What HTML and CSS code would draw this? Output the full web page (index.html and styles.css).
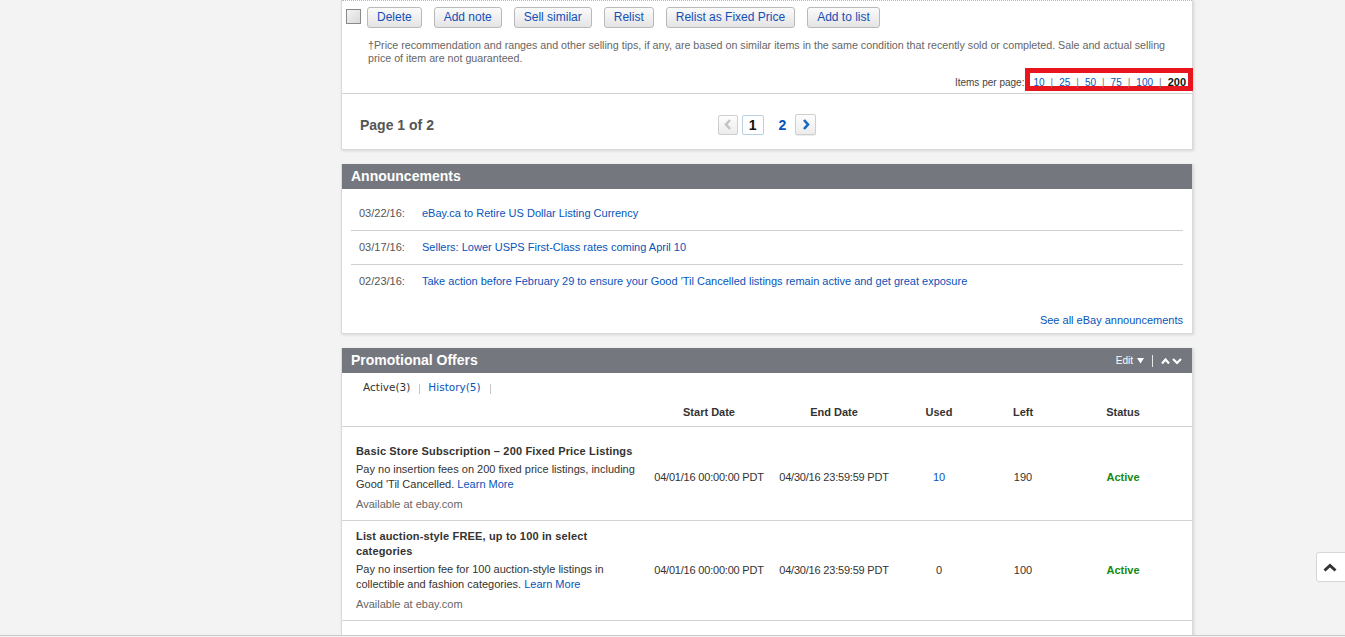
FILE: index.html
```html
<!DOCTYPE html>
<html>
<head>
<meta charset="utf-8">
<title>Seller Hub</title>
<link rel="stylesheet" href="styles.css">
</head>
<body>
<div class="main">
  <section class="card card-top">
    <div class="actions">
      <span class="cb"></span>
      <button class="btn">Delete</button>
      <button class="btn">Add note</button>
      <button class="btn">Sell similar</button>
      <button class="btn">Relist</button>
      <button class="btn">Relist as Fixed Price</button>
      <button class="btn">Add to list</button>
    </div>
    <p class="note">†Price recommendation and ranges and other selling tips, if any, are based on similar items in the same condition that recently sold or completed. Sale and actual selling price of item are not guaranteed.</p>
    <div class="ipp">
      <span class="ipp-label">Items per page:</span>
      <span class="ipp-box">
        <a href="#">10</a><span class="sep">|</span><a href="#">25</a><span class="sep">|</span><a href="#">50</a><span class="sep">|</span><a href="#">75</a><span class="sep">|</span><a href="#">100</a><span class="sep">|</span><b>200</b>
      </span>
    </div>
    <div class="pager-row">
      <span class="page-of">Page 1 of 2</span>
      <div class="pager">
        <span class="pbtn prev"><svg width="8" height="11" viewBox="0 0 8 11"><polyline points="6,1 2,5.5 6,10" fill="none" stroke="#c4c4c4" stroke-width="2.6"/></svg></span>
        <span class="pcur">1</span>
        <a class="pnum" href="#">2</a>
        <span class="pbtn next"><svg width="8" height="11" viewBox="0 0 8 11"><polyline points="2,1 6,5.5 2,10" fill="none" stroke="#1a66c4" stroke-width="2.6"/></svg></span>
      </div>
      <span></span>
    </div>
  </section>

  <section class="card">
    <h2 class="bar">Announcements</h2>
    <div class="ann">
      <div class="ann-row"><span class="ann-date">03/22/16:</span><a href="#">eBay.ca to Retire US Dollar Listing Currency</a></div>
      <div class="ann-row"><span class="ann-date">03/17/16:</span><a href="#">Sellers: Lower USPS First-Class rates coming April 10</a></div>
      <div class="ann-row"><span class="ann-date">02/23/16:</span><a href="#">Take action before February 29 to ensure your Good 'Til Cancelled listings remain active and get great exposure</a></div>
      <div class="ann-all"><a href="#">See all eBay announcements</a></div>
    </div>
  </section>

  <section class="card">
    <div class="bar bar-flex">
      <h2 class="bar-title">Promotional Offers</h2>
      <div class="bar-tools">
        <span class="edit">Edit <svg width="7" height="6" viewBox="0 0 7 6"><polygon points="0,0 7,0 3.5,5.5" fill="#fff"/></svg></span>
        <span class="vsep"></span>
        <svg width="21" height="8" viewBox="0 0 21 8"><polyline points="1,6.5 4.5,2.5 8,6.5" fill="none" stroke="#fff" stroke-width="2.2"/><polyline points="12,2 16,6 20,2" fill="none" stroke="#fff" stroke-width="2.2"/></svg>
      </div>
    </div>
    <div class="tabs">
      <span class="tab tab-on">Active(3)</span><span class="tsep"></span><a class="tab" href="#">History(5)</a><span class="tsep"></span>
    </div>
    <table class="offers">
      <colgroup><col class="c-title"><col class="c-start"><col class="c-end"><col class="c-used"><col class="c-left"><col class="c-status"></colgroup>
      <thead>
        <tr><th></th><th>Start Date</th><th>End Date</th><th>Used</th><th>Left</th><th class="st">Status</th></tr>
      </thead>
      <tbody>
        <tr class="first">
          <td class="t">
            <div class="o-title">Basic Store Subscription – 200 Fixed Price Listings</div>
            <div class="o-desc">Pay no insertion fees on 200 fixed price listings, including Good 'Til Cancelled. <a href="#">Learn More</a></div>
            <div class="o-avail">Available at ebay.com</div>
          </td>
          <td class="d">04/01/16 00:00:00 PDT</td>
          <td class="d">04/30/16 23:59:59 PDT</td>
          <td><a href="#">10</a></td>
          <td>190</td>
          <td class="st active">Active</td>
        </tr>
        <tr>
          <td class="t">
            <div class="o-title">List auction-style FREE, up to 100 in select categories</div>
            <div class="o-desc">Pay no insertion fee for 100 auction-style listings in collectible and fashion categories. <a href="#">Learn More</a></div>
            <div class="o-avail">Available at ebay.com</div>
          </td>
          <td class="d">04/01/16 00:00:00 PDT</td>
          <td class="d">04/30/16 23:59:59 PDT</td>
          <td>0</td>
          <td>100</td>
          <td class="st active">Active</td>
        </tr>
        <tr>
          <td class="t">
            <div class="o-title">&nbsp;</div>
          </td>
          <td></td><td></td><td></td><td></td><td class="st"></td>
        </tr>
      </tbody>
    </table>
  </section>
</div>

<a class="to-top" href="#"><svg width="14" height="9" viewBox="0 0 14 9"><polyline points="1.5,7.5 7,2.5 12.5,7.5" fill="none" stroke="#333" stroke-width="3"/></svg></a>
<div class="bottom-line"></div>
</body>
</html>
```

FILE: styles.css
```css
* { box-sizing: border-box; }
html, body { margin: 0; padding: 0; }
body {
  background: #f3f3f3;
  font-family: "Liberation Sans", Arial, sans-serif;
  font-size: 11px;
  color: #333;
  height: 637px;
  overflow: hidden;
}
a { color: #0654ba; text-decoration: none; }

.main {
  margin-left: 341px;
  width: 852px;
  display: flex;
  flex-direction: column;
  gap: 14px;
}

.card {
  background: #fff;
  border: 1px solid #dadada;
  border-top: 0;
  box-shadow: 1px 1px 3px rgba(0, 0, 0, 0.12);
}

/* top card */
.actions {
  border-top: 1px dotted #b8b8b8;
  padding: 6px 0 0 4px;
  display: flex;
  gap: 12px;
  height: 28px;
  align-items: flex-start;
}
.cb {
  width: 15px;
  height: 15px;
  margin-top: 2px;
  margin-right: -6px;
  border: 1px solid #8a8a8a;
  background: linear-gradient(135deg, #f4f4f4, #d9d9d9);
}
.btn {
  height: 21px;
  padding: 0 9px;
  font-family: "Liberation Sans", Arial, sans-serif;
  font-size: 12px;
  color: #1450b8;
  background: linear-gradient(#fbfbfb, #e4e4e4);
  border: 1px solid #b9b9b9;
  border-radius: 3px;
  line-height: 19px;
}

.note {
  margin: 11px 14px 0 26px;
  font-size: 10.7px;
  line-height: 13px;
  color: #666;
}

.ipp {
  margin-top: 3px;
  margin-bottom: 2px;
  margin-right: -1px;
  display: flex;
  justify-content: flex-end;
  align-items: flex-start;
  height: 23px;
  font-size: 10px;
  line-height: 13px;
}
.ipp-label { color: #444; margin-top: 8px; margin-right: 1px; }
.ipp-box {
  display: inline-flex;
  align-items: flex-start;
  height: 23px;
  border: 5px solid #e8151f;
  padding: 3px 2px 0 3px;
  line-height: 13px;
}
.ipp-box .sep { color: #777; margin: 0 6px; }
.ipp-box b { color: #111; font-size: 11px; }

.pager-row {
  border-top: 1px solid #d3d3d3;
  padding: 20px 18px 15px;
  display: grid;
  grid-template-columns: 1fr auto 1fr;
  align-items: center;
  height: 56px;
}
.page-of { font-size: 14px; font-weight: bold; color: #555; }
.pager { display: flex; align-items: center; }
.pbtn {
  display: flex;
  align-items: center;
  justify-content: center;
  height: 20px;
  border: 1px solid #cfcfcf;
  border-radius: 2px;
  background: linear-gradient(#fdfdfd, #ececec);
}
.prev { width: 20px; }
.next { width: 21px; height: 21px; box-shadow: 0 1px 1px rgba(0,0,0,.08); }
.pcur {
  width: 22px;
  height: 20px;
  margin-left: 4px;
  border: 1px solid #b8d0e4;
  border-radius: 2px;
  display: flex;
  align-items: center;
  justify-content: center;
  font-size: 14px;
  font-weight: bold;
  color: #111;
}
.pnum {
  font-size: 14px;
  font-weight: bold;
  margin: 0 9px 0 15px;
}

/* headers */
.bar {
  margin: 0;
  height: 25px;
  line-height: 25px;
  background: #75777e;
  color: #fff;
  font-size: 14px;
  font-weight: bold;
  padding-left: 9px;
}
.bar-flex { display: flex; justify-content: space-between; align-items: center; padding-right: 10px; }
.bar-title { margin: 0; font-size: 14px; font-weight: bold; }
.bar-tools { display: flex; align-items: center; font-weight: normal; font-size: 10px; }
.edit { display: flex; align-items: center; gap: 4px; }
.vsep { width: 1px; height: 12px; background: #e8e8e8; margin: 1px 8px 0; }

/* announcements */
.ann { padding: 8px 9px 6px 9px; }
.ann-row {
  display: flex;
  align-items: center;
  height: 34px;
  border-bottom: 1px solid #cfcfcf;
  padding-left: 8px;
  padding-bottom: 1px;
}
.ann-row:nth-child(3) { border-bottom: 0; height: 33px; }
.ann-date { width: 63px; color: #555; }
.ann-all { text-align: right; margin-top: 15px; line-height: 14px; }

/* promo */
.tabs {
  height: 26px;
  padding: 7px 0 0 21px;
  font-family: "DejaVu Sans", Verdana, sans-serif;
  font-size: 10.5px;
  line-height: 14px;
  display: flex;
  align-items: flex-start;
}
.tab-on { color: #333; }
.tsep { width: 1px; height: 10px; background: #c9c9c9; margin: 4px 8px 0 9px; }

.offers {
  width: 100%;
  border-collapse: collapse;
  table-layout: fixed;
}
.c-title { width: 310px; }
.c-start { width: 114px; }
.c-end { width: 136px; }
.c-used { width: 74px; }
.c-left { width: 94px; }
.c-status { width: 122px; }
.offers th {
  height: 27px;
  font-size: 11px;
  font-weight: bold;
  color: #333;
  text-align: center;
  border-bottom: 1px solid #d3d3d3;
  padding: 0;
}
.offers td {
  text-align: center;
  vertical-align: middle;
  padding: 8px 0;
  border-bottom: 1px solid #d3d3d3;
  color: #333;
  line-height: 15px;
}
.offers td.d { letter-spacing: -0.2px; }
.offers tr.first td { padding-top: 17px; }
.offers .st { padding-right: 16px; }
.offers td.t { text-align: left; padding-left: 14px; padding-right: 12px; }
.o-title { font-weight: bold; color: #333; letter-spacing: 0.16px; }
.o-desc { margin-top: 3px; }
.o-avail { margin-top: 5px; color: #666; }
.active { color: #138a13 !important; font-weight: bold; }

.to-top {
  position: fixed;
  left: 1316px;
  top: 552px;
  width: 34px;
  height: 30px;
  background: #fff;
  border: 1px solid #d6d6d6;
  border-radius: 3px;
  display: flex;
  align-items: center;
  padding-left: 6px;
}
.bottom-line {
  position: fixed;
  left: 0;
  right: 0;
  bottom: 0;
  height: 2px;
  border-top: 1px solid #c9c9c9;
  background: #f3f3f3;
}
```
